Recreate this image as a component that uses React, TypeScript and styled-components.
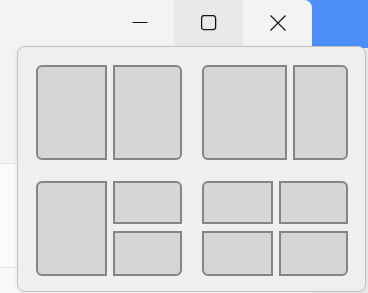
import React from "react";
import styled, { createGlobalStyle } from "styled-components";

const GlobalStyle = createGlobalStyle`
  * {
    box-sizing: border-box;
  }
  body {
    margin: 0;
    font-family: "Segoe UI", "Noto Sans", "Liberation Sans", sans-serif;
    background: #f3f3f3;
    overflow: hidden;
  }
`;

const Page = styled.div`
  position: relative;
  display: flex;
  width: 368px;
  height: 293px;
  overflow: hidden;
  background: linear-gradient(#4b8ff7 0 48px, #ececec 48px);
`;

const Window = styled.div`
  display: flex;
  flex-direction: column;
  width: 312px;
  height: 100%;
  background: #f3f3f3;
  border-top-right-radius: 8px;
  overflow: hidden;
`;

const TitleBar = styled.div`
  display: flex;
  justify-content: flex-end;
  height: 46px;
  flex-shrink: 0;
`;

const CaptionButton = styled.div<{ $hover?: boolean }>`
  display: flex;
  align-items: center;
  justify-content: center;
  width: 69px;
  height: 100%;
  color: #151515;
  background: ${(props) => (props.$hover ? "#e9e9e9" : "transparent")};
`;

const Band = styled.div<{ $h: number; $bg: string }>`
  height: ${(props) => props.$h}px;
  background: ${(props) => props.$bg};
  flex-shrink: 0;
`;

const Rule = styled.div`
  height: 1px;
  background: #e3e3e3;
  flex-shrink: 0;
`;

const Flyout = styled.div`
  position: absolute;
  left: 17px;
  top: 46px;
  width: 349px;
  height: 246px;
  padding: 18px 0 0 18px;
  background: #efefef;
  border: 1px solid #c2c2c2;
  border-radius: 8px;
  box-shadow: 0 2px 6px rgba(0, 0, 0, 0.08);
  display: grid;
  grid-template-columns: 146px 146px;
  grid-template-rows: 95px 95px;
  column-gap: 20px;
  row-gap: 21px;
  align-content: start;
`;

const Layout = styled.div<{ $cols: string; $rows?: string }>`
  display: grid;
  grid-template-columns: ${(props) => props.$cols};
  grid-template-rows: ${(props) => props.$rows || "95px"};
  column-gap: 6px;
  row-gap: 7px;
`;

const Tile = styled.div<{ $radius: string; $span?: boolean }>`
  background: #d6d6d6;
  border: 2px solid #858585;
  border-radius: ${(props) => props.$radius};
  grid-row: ${(props) => (props.$span ? "span 2" : "auto")};
`;

const R = "6px";

const App = () => {
  return (
    <>
      <GlobalStyle />
      <Page>
        <Window>
          <TitleBar>
            <CaptionButton>
              <svg width="16" height="16" viewBox="0 0 16 16">
                <line x1="0.5" y1="7.5" x2="15.5" y2="7.5" stroke="currentColor" strokeWidth="1.2" />
              </svg>
            </CaptionButton>
            <CaptionButton $hover>
              <svg width="16" height="16" viewBox="0 0 16 16">
                <rect x="0.6" y="0.6" width="14" height="14" rx="2.5" fill="none" stroke="currentColor" strokeWidth="1.3" />
              </svg>
            </CaptionButton>
            <CaptionButton>
              <svg width="16" height="16" viewBox="0 0 16 16">
                <path d="M0.5 0.5 L15.5 15.5 M15.5 0.5 L0.5 15.5" stroke="currentColor" strokeWidth="1.2" />
              </svg>
            </CaptionButton>
          </TitleBar>
          <Band $h={117} $bg="#f3f3f3" />
          <Rule />
          <Band $h={103} $bg="#fbfbfb" />
          <Rule />
          <Band $h={30} $bg="#f9f9f9" />
        </Window>

        <Flyout>
          <Layout $cols="71px 69px">
            <Tile $radius={`${R} 0 0 ${R}`} />
            <Tile $radius={`0 ${R} ${R} 0`} />
          </Layout>
          <Layout $cols="85px 55px">
            <Tile $radius={`${R} 0 0 ${R}`} />
            <Tile $radius={`0 ${R} ${R} 0`} />
          </Layout>
          <Layout $cols="71px 69px" $rows="43px 45px">
            <Tile $span $radius={`${R} 0 0 ${R}`} />
            <Tile $radius={`0 ${R} 0 0`} />
            <Tile $radius={`0 0 ${R} 0`} />
          </Layout>
          <Layout $cols="71px 69px" $rows="43px 45px">
            <Tile $radius={`${R} 0 0 0`} />
            <Tile $radius={`0 ${R} 0 0`} />
            <Tile $radius={`0 0 0 ${R}`} />
            <Tile $radius={`0 0 ${R} 0`} />
          </Layout>
        </Flyout>
      </Page>
    </>
  );
};

export default App;
